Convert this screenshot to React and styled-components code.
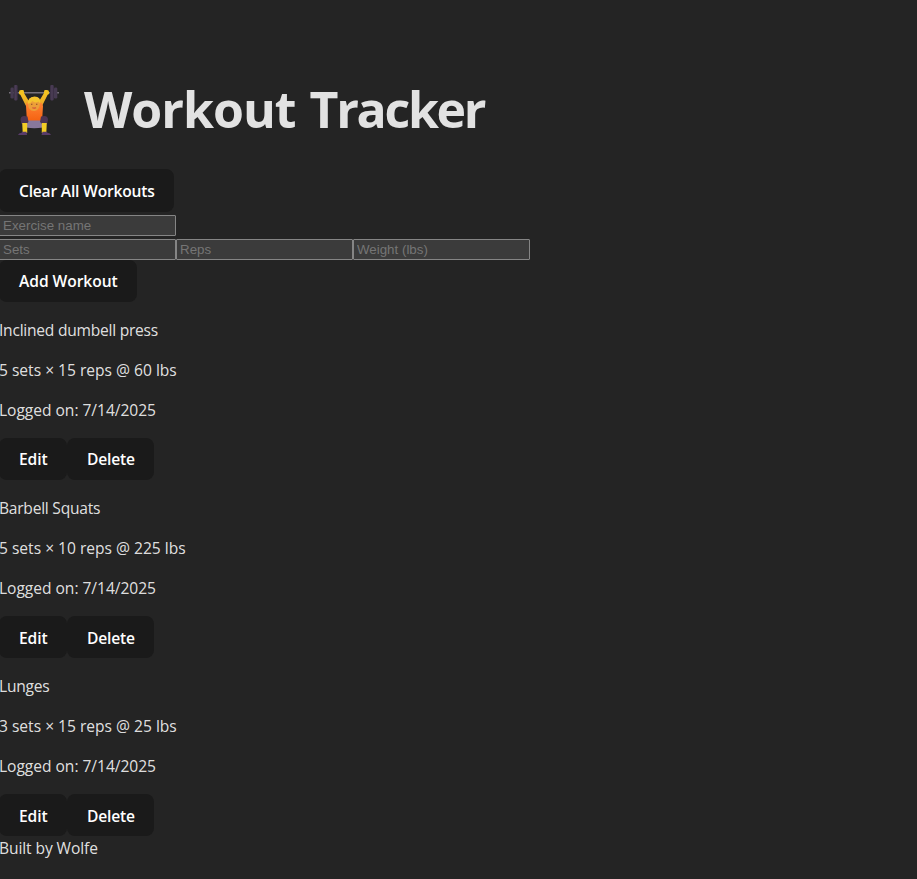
import React from "react";
import styled, { createGlobalStyle } from "styled-components";

const GlobalStyle = createGlobalStyle`
  * { box-sizing: border-box; }
  html { background: #242424; color-scheme: dark; }
  body { margin: 0; overflow: hidden; }
`;

const Page = styled.main`
  display: flex;
  flex-direction: column;
  align-items: flex-start;
  min-height: 879px;
  margin-left: -1px;
  padding-top: 76px;
  color: rgba(255, 255, 255, 0.87);
  background: #242424;
  font-family: "Segoe UI", "Open Sans", sans-serif;
  font-size: 15.6px;
  line-height: 24px;
  white-space: nowrap;
`;

const Title = styled.h1`
  display: flex;
  align-items: center;
  gap: 23px;
  height: 67px;
  margin: 0 0 26px;
  padding-left: 9px;
  font-size: 50px;
  font-weight: 700;
  line-height: 67px;
  letter-spacing: -1px;
  word-spacing: 2px;
`;

const TightWord = styled.span`
  letter-spacing: -2.3px;
`;

const Lifter = styled.svg`
  display: block;
  width: 53px;
  height: 53px;
`;

const Button = styled.button`
  width: ${(p) => p.$width}px;
  height: ${(p) => p.$height || 42}px;
  padding: ${(p) => p.$drop || 0}px 0 0 20px;
  border: 0;
  border-radius: 8px;
  background: #1a1a1a;
  color: #fff;
  font-family: inherit;
  font-size: 15.6px;
  font-weight: 600;
  line-height: 24px;
  letter-spacing: ${(p) => p.$tracking || 0}px;
  text-align: left;
`;

const Form = styled.form`
  display: flex;
  flex-direction: column;
  align-items: flex-start;
  margin-top: 3px;
`;

const Fields = styled.div`
  display: flex;
  margin-top: ${(p) => (p.$spaced ? 3 : 0)}px;
`;

const Input = styled.input`
  width: 177px;
  height: 21px;
  padding: 1px 3px;
  border: 1px solid #858585;
  border-radius: 1px;
  background: #3b3b3b;
  color: #fff;
  font: 13.333px "Liberation Sans", Arial, sans-serif;
  &::placeholder { color: #757575; opacity: 1; }
`;

const Workout = styled.article`
  display: flex;
  flex-direction: column;
  gap: 16px;
  padding-top: 16px;
`;

const Line = styled.p`
  margin: 0;
  height: 24px;
  letter-spacing: ${(p) => p.$tracking || 0}px;
`;

const Actions = styled.div`
  display: flex;
`;

const workouts = [
  { name: "Inclined dumbell press", detail: "5 sets × 15 reps @ 60 lbs", drop: 0 },
  { name: "Barbell Squats", detail: "5 sets × 10 reps @ 225 lbs", drop: 2 },
  { name: "Lunges", detail: "3 sets × 15 reps @ 25 lbs", drop: 2 },
];

function WeightLifter() {
  return (
    <Lifter viewBox="8 83 53 53" aria-hidden="true">
      <defs>
        <linearGradient id="shirt" x1="0" y1="0" x2="0" y2="1">
          <stop offset="0" stopColor="#ff8435" />
          <stop offset="1" stopColor="#f4600f" />
        </linearGradient>
        <linearGradient id="skin" x1="0" y1="0" x2="0" y2="1">
          <stop offset="0" stopColor="#f6c425" />
          <stop offset="1" stopColor="#e6a126" />
        </linearGradient>
        <linearGradient id="plate">
          <stop offset="0" stopColor="#382e41" />
          <stop offset=".5" stopColor="#4e3f59" />
          <stop offset="1" stopColor="#352b3e" />
        </linearGradient>
      </defs>
      <path d="M9 92.8h50" stroke="#77717b" strokeWidth="1.4" />
      <path d="M20 94l4-1 6 10v4l-4-1zM48 94l-4-1-6 10v4l4-1z" fill="url(#skin)" />
      <path d="M19 92q0-2 2-2h2q1 0 1 2v2.5h-4q-1 0-1-1zM49 92q0-2-2-2h-2q-1 0-1 2v2.5h4q1 0 1-1z" fill="#f3c321" />
      <path d="M26.5 102.5q7.5 2 15 0l1.5 3.5-1 16H27l-1-16z" fill="url(#shirt)" />
      <path d="M27 120.5h15l1 7q-9 1.5-17 0z" fill="#88789c" />
      <path d="M27.5 116.5q-7-2-7 3.5l1 4h5l2-2zM41 116.5q7-2 7 3.5l-1 4h-5l-2-2z" fill="#4a3453" />
      <path d="M22.2 123h5v10h-4.5zM41.8 123h5l-.5 10h-4.5z" fill="#f2cc25" />
      <path d="M18 135q.5-2 3.5-2.2l1-1h4l.5 3.2zM51 135q-.5-2-3.5-2.2l-1-1h-4L41.5 135z" fill="#593c69" />
      <path d="M28 103q0-6 6-6 7 0 6 7-1 7-6 7-6 0-6-8" fill="#ec9f38" />
      <path d="M27.7 104q0-7 6.8-7.5 6.5 0 5.8 7l-2-2q-3 2-6-.5-1 2-4.6 3" fill="#f5c32d" />
      <path d="M31 104.2h1.4M36 104.2h1.4" stroke="#8b4728" strokeWidth="1.1" />
      <path d="M32.3 107.7q1.9.8 3.8 0" fill="none" stroke="#d14d38" strokeWidth="1.1" />
      <rect x="10.5" y="87.5" width="3.3" height="11" rx="1.3" fill="#463a51" />
      <rect x="13.8" y="85" width="4" height="15.5" rx="1.4" fill="url(#plate)" />
      <rect x="50" y="85" width="4" height="15.5" rx="1.4" fill="url(#plate)" />
      <rect x="54" y="87.5" width="3.3" height="11" rx="1.3" fill="#463a51" />
    </Lifter>
  );
}

export default function App() {
  return (
    <>
      <GlobalStyle />
      <Page>
        <Title><WeightLifter /><span>Workout <TightWord>Tracker</TightWord></span></Title>
        <Button $width={175} $height={43} $tracking={-0.2}>Clear All Workouts</Button>
        <Form onSubmit={(e) => e.preventDefault()}>
          <Fields><Input placeholder="Exercise name" /></Fields>
          <Fields $spaced>
            <Input placeholder="Sets" />
            <Input placeholder="Reps" />
            <Input placeholder="Weight (lbs)" />
          </Fields>
          <Button $width={138} $tracking={-0.06}>Add Workout</Button>
        </Form>
        {workouts.map((workout) => (
          <Workout key={workout.name}>
            <Line $tracking={-0.25}>{workout.name}</Line>
            <Line $tracking={-0.01}>{workout.detail}</Line>
            <Line $tracking={-0.04}>Logged on: 7/14/2025</Line>
            <Actions>
              <Button $width={68} $drop={workout.drop} $tracking={-0.1}>Edit</Button>
              <Button $width={87} $drop={workout.drop} $tracking={-0.2}>Delete</Button>
            </Actions>
          </Workout>
        ))}
        <Line as="footer" $tracking={-0.1}>Built by Wolfe</Line>
      </Page>
    </>
  );
}
